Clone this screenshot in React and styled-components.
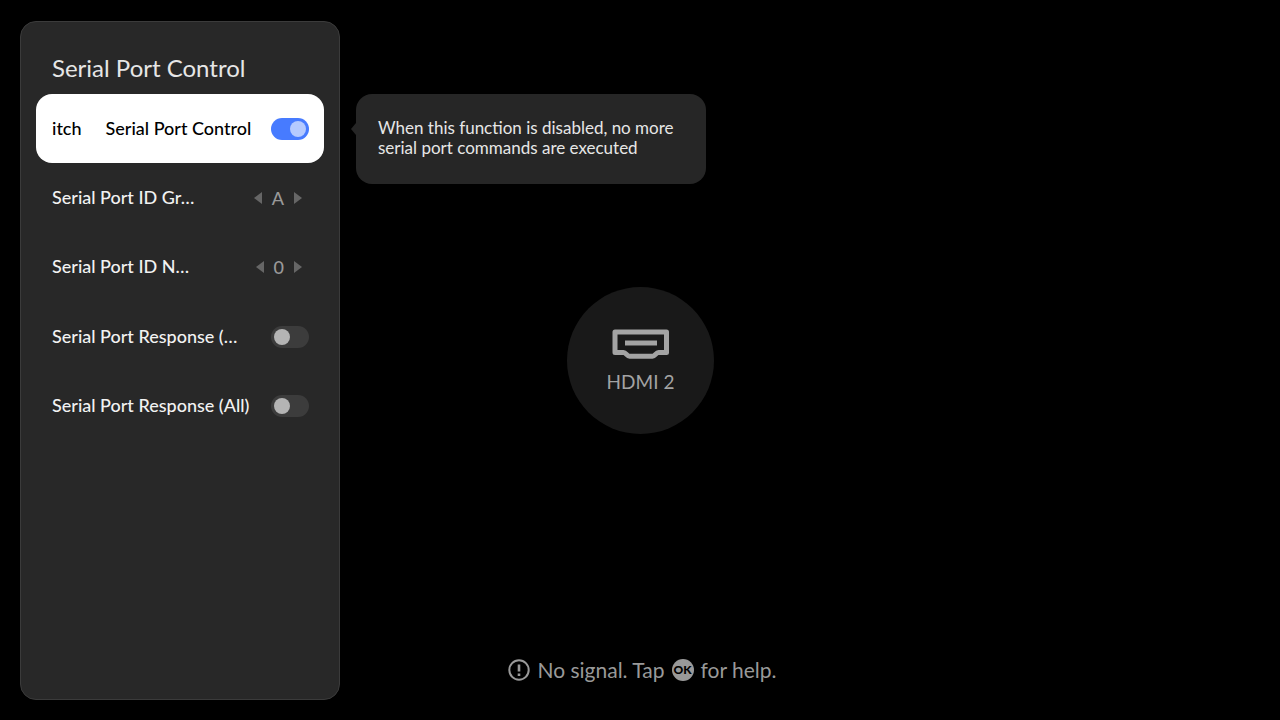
import React, { useState } from "react";
import styled, { createGlobalStyle } from "styled-components";

const GlobalStyle = createGlobalStyle`
  *, *::before, *::after { box-sizing: border-box; }
  body {
    margin: 0;
    background: #000;
    color: #e6e6e6;
    font-family: Lato, "Noto Sans", sans-serif;
  }
`;

const Screen = styled.main`
  display: grid;
  grid-template: minmax(100vh, auto) / 1fr;
  overflow: hidden;
`;

const Signal = styled.section`
  grid-area: 1 / 1;
  display: grid;
  grid-template-rows: 1fr auto 1fr;
  justify-items: center;
  padding-left: 1px;
  color: #a3a3a3;
`;

const Source = styled.div`
  grid-row: 2;
  display: flex;
  flex-direction: column;
  align-items: center;
  gap: 11px;
  width: 147px;
  height: 147px;
  padding-top: 42px;
  border-radius: 50%;
  background: #191919;
  font-size: 19px;
  line-height: 24px;
`;

const Hint = styled.p`
  grid-row: 3;
  align-self: end;
  display: flex;
  align-items: center;
  gap: 7px;
  margin: 0;
  padding: 0 0 36px 4px;
  font-size: 21px;
  line-height: 28px;
  color: #999;
`;

const OkKey = styled.span`
  width: 22px;
  height: 22px;
  border-radius: 50%;
  background: #999;
  color: #000;
  font-size: 12px;
  font-weight: 900;
  line-height: 22px;
  text-align: center;
`;

const Overlay = styled.div`
  grid-area: 1 / 1;
  display: flex;
  align-items: stretch;
  gap: 16px;
  padding: 21px 20px 20px;
  z-index: 1;
`;

const Panel = styled.section`
  flex: 0 0 auto;
  width: 25vw;
  min-width: 320px;
  padding: 30px 15px;
  border: 1px solid #3b3b3b;
  border-radius: 16px;
  background: #282828;
`;

const Title = styled.h1`
  margin: 0;
  padding: 0 16px 10px;
  font-size: 24px;
  font-weight: 400;
  line-height: 32px;
`;

const Rows = styled.div`
  display: grid;
  grid-auto-rows: 1fr;
  min-height: 347px;
`;

const Row = styled.div`
  display: flex;
  align-items: center;
  justify-content: space-between;
  padding: 0 15px 0 16px;
  border-radius: 16px;
  background: ${(p) => (p.$focused ? "#fff" : "transparent")};
  color: ${(p) => (p.$focused ? "#000" : "#f2f2f2")};
  font-size: 18px;
  font-weight: 500;
  line-height: 24px;
  white-space: nowrap;
`;

const Label = styled.label`
  display: flex;
  gap: 24px;
  padding-bottom: 2px;
`;

const Toggle = styled.input`
  appearance: none;
  display: flex;
  align-items: center;
  width: 38px;
  height: 22px;
  margin: 0;
  padding: 0 3px;
  border-radius: 11px;
  background: #3c3c3c;

  &::before {
    content: "";
    width: 16px;
    height: 16px;
    border-radius: 50%;
    background: #b4b4b4;
  }
  &:checked {
    justify-content: flex-end;
    background: #477bff;
  }
  &:checked::before {
    background: #b5caff;
  }
`;

const Stepper = styled.div`
  display: flex;
  align-items: center;
  gap: 10px;
  padding-right: 7px;
  color: #999;
`;

const StepButton = styled.button`
  display: flex;
  padding: 0;
  border: 0;
  background: none;
  color: #666;
`;

const Tip = styled.aside`
  position: relative;
  align-self: flex-start;
  width: 350px;
  min-height: 90px;
  margin-top: 73px;
  padding: 24px 22px;
  border-radius: 16px;
  background: #262626;
  font-size: 17px;
  line-height: 20px;

  &::before {
    content: "";
    position: absolute;
    left: -5px;
    top: 29px;
    border: solid transparent;
    border-width: 6px 5px 6px 0;
    border-right-color: #262626;
  }
`;

const Arrow = ({ path }) => (
  <svg width="8" height="14" viewBox="0 0 8 14" fill="currentColor" aria-hidden="true">
    <path d={path} />
  </svg>
);

function SwitchRow({ id, text, focused, initial = false }) {
  const [on, setOn] = useState(initial);
  return (
    <Row $focused={focused}>
      <Label htmlFor={id}>
        {text.map((part) => (
          <span key={part}>{part}</span>
        ))}
      </Label>
      <Toggle id={id} type="checkbox" checked={on} onChange={() => setOn(!on)} />
    </Row>
  );
}

function StepRow({ id, text, values }) {
  const [index, setIndex] = useState(0);
  const move = (by) => setIndex((index + by + values.length) % values.length);
  return (
    <Row>
      <Label as="span" id={id}>{text}</Label>
      <Stepper role="group" aria-labelledby={id}>
        <StepButton type="button" aria-label="Previous" onClick={() => move(-1)}>
          <Arrow path="M8 1v12L0 7z" />
        </StepButton>
        <span>{values[index]}</span>
        <StepButton type="button" aria-label="Next" onClick={() => move(1)}>
          <Arrow path="M0 1v12l8-6z" />
        </StepButton>
      </Stepper>
    </Row>
  );
}

export default function App() {
  return (
    <Screen>
      <GlobalStyle />
      <Signal>
        <Source>
          <svg width="58" height="30" viewBox="0 0 58 30" fill="none" stroke="currentColor" aria-hidden="true">
            <path
              d="M3 3H54.500V23.500H46.500C44 23.500 43 27.300 40.500 27.300H17.500C15 27.300 14 23.500 11.500 23.500H3Z"
              strokeWidth="5"
              strokeLinejoin="round"
            />
            <path d="M13 14H45" strokeWidth="5" />
          </svg>
          HDMI 2
        </Source>
        <Hint>
          <svg width="22" height="22" viewBox="0 0 22 22" fill="none" stroke="currentColor" aria-hidden="true">
            <circle cx="11" cy="11" r="9.700" strokeWidth="2" />
            <path d="M11 5.500V12.500M11 14.500V17" strokeWidth="2.600" />
          </svg>
          <span>No signal. Tap</span>
          <OkKey>OK</OkKey>
          <span>for help.</span>
        </Hint>
      </Signal>
      <Overlay>
        <Panel>
          <Title>Serial Port Control</Title>
          <Rows>
            <SwitchRow id="control" text={["itch", "Serial Port Control"]} focused initial />
            <StepRow id="group" text="Serial Port ID Gr…" values={["A", "B", "C"]} />
            <StepRow id="number" text="Serial Port ID N…" values={["0", "1", "2"]} />
            <SwitchRow id="response" text={["Serial Port Response (…"]} />
            <SwitchRow id="response-all" text={["Serial Port Response (All)"]} />
          </Rows>
        </Panel>
        <Tip>When this function is disabled, no more serial port commands are executed</Tip>
      </Overlay>
    </Screen>
  );
}
